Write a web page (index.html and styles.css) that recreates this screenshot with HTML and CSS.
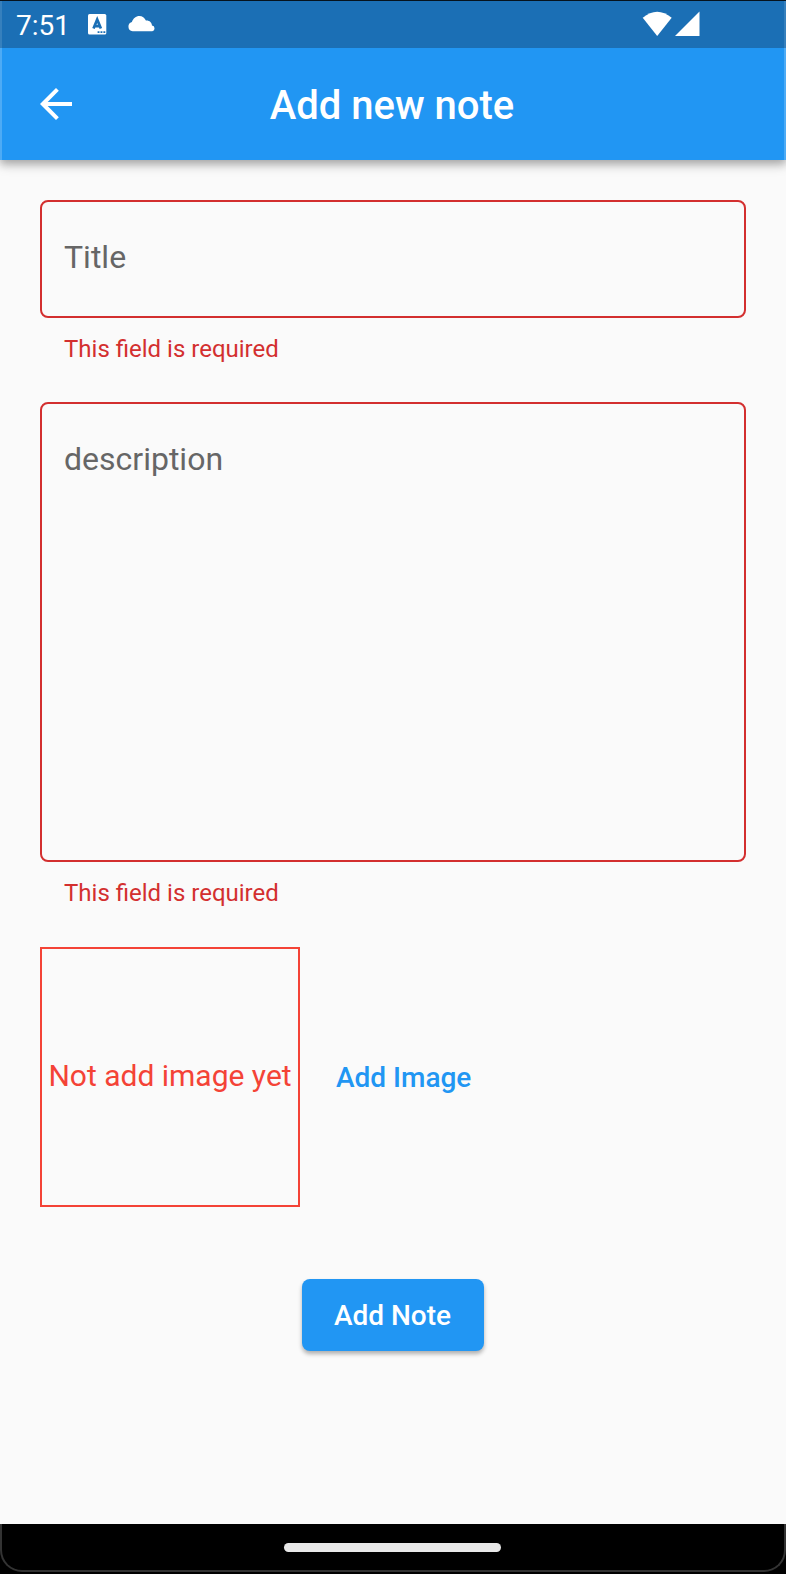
FILE: index.html
```html
<!DOCTYPE html>
<html lang="en">
<head>
<meta charset="utf-8">
<title>Add new note</title>
<link rel="stylesheet" href="styles.css">
</head>
<body>
<div class="screen">
  <header class="top">
    <div class="status">
      <span class="time">7:51</span>
      <svg class="icon-a" width="20" height="22" viewBox="0 0 20 22"><rect x="0" y="0" width="18.300" height="20.600" rx="1.600" fill="#fff"/><path d="M5.500 14.500 9.200 5.500 12.900 14.500M6.800 12.200h4.800" fill="none" stroke="#1b6fb5" stroke-width="2.700"/><path d="M9.600 18.100h1.900m1 0h1.900m1 0h1.900" stroke="#1b6fb5" stroke-width="1.600"/></svg>
      <svg class="icon-cloud" width="28" height="17" viewBox="0 0 28 17"><path d="M4.600 16.300A4.700 4.700 0 0 1 3.900 7.100C5 3.400 8 .9 11.400.9C14.300.9 16.700 2.600 17.900 5.600C21.500 5.300 23.800 7.600 24 10.600A2.900 2.900 0 0 1 24.300 16.300Z" fill="#fff"/></svg>
      <svg class="icon-net" width="60" height="26" viewBox="0 0 60 26"><path d="M0.700 6.800Q15.200-5.400 29.700 6.800L15.200 25Z" fill="#fff"/><path d="M57.500.5V25H33Z" fill="#fff"/></svg>
    </div>
    <div class="appbar">
      <svg class="back" width="32" height="32" viewBox="0 0 32 32"><path d="M32 16H4M17.400 1.400 2.800 16l14.600 14.600" fill="none" stroke="#fff" stroke-width="4"/></svg>
      <h1 class="heading">Add new note</h1>
    </div>
  </header>
  <main class="form">
    <div class="field field-title">Title</div>
    <p class="error">This field is required</p>
    <div class="field field-desc">description</div>
    <p class="error">This field is required</p>
    <div class="image-row">
      <div class="image-box">Not add image yet</div>
      <span class="add-image">Add Image</span>
    </div>
    <button class="submit">Add Note</button>
  </main>
  <footer class="nav"><div class="frame"><div class="pill"></div></div></footer>
</div>
</body>
</html>
```
FILE: styles.css
```css
* { box-sizing: border-box; }
body { margin: 0; background: #fafafa; font-family: Roboto, sans-serif; }
.screen { width: 786px; height: 1574px; display: flex; flex-direction: column; overflow: hidden; }
.top { height: 160px; flex: none; background: #2196f3; box-shadow: 0 4px 8px rgba(0,0,0,.24), 0 5px 12px rgba(0,0,0,.14); border-top: 1px solid #06131e; }
.status { height: 47px; display: flex; align-items: flex-start; background: #1b6fb5; color: #fff; border: solid #3680bd; border-width: 0 2px; padding-left: 14px; }
.time { width: 72px; font-size: 28px; line-height: 33px; margin-top: 8px; }
.icon-a { margin-top: 13px; }
.icon-cloud { margin: 14px 0 0 20px; }
.icon-net { margin: 10px 0 0 486px; }
.appbar { height: 112px; display: grid; grid-template-columns: 70px 1fr 70px; align-items: center; border: solid #4dabf5; border-width: 0 2px; }
.back { margin-left: 38px; }
.heading { margin: 4px 2px 0 0; text-align: center; color: #fff; font-size: 40px; font-weight: 500; line-height: 48px; }
.form { flex: 1; padding: 40px 40px 0; display: flex; flex-direction: column; }
.field { border: 2px solid #d32f2f; border-radius: 8px; padding: 36px 22px; font-size: 32px; line-height: 38px; color: #666; }
.field-title { height: 118px; }
.field-desc { height: 460px; margin-top: 39px; }
.error { margin: 17px 24px 0; height: 28px; line-height: 28px; font-size: 24px; color: #d32f2f; }
.image-row { display: flex; align-items: center; margin-top: 40px; gap: 36px; }
.image-box { width: 260px; height: 260px; border: 2px solid #f44336; color: #f44336; display: flex; align-items: center; justify-content: center; white-space: nowrap; font-size: 30px; padding-bottom: 3px; }
.add-image { color: #2196f3; font-size: 28px; font-weight: 500; }
.submit { align-self: center; width: 182px; height: 72px; margin: 72px 0 0; padding: 0 1px 0 0; border: 0; border-radius: 8px; background: #2196f3; color: #fff; font: 500 28px Roboto, sans-serif; box-shadow: 0 3px 4px rgba(0,0,0,.3); }
.nav { height: 50px; flex: none; background: #000; padding-bottom: 2px; }
.frame { height: 48px; border: 2px solid #333; border-top: 0; border-radius: 0 0 22px 22px; display: flex; justify-content: center; }
.pill { width: 217px; height: 9px; margin: 19px 1px 0 0; border-radius: 5px; background: #e8e8e8; }
```
